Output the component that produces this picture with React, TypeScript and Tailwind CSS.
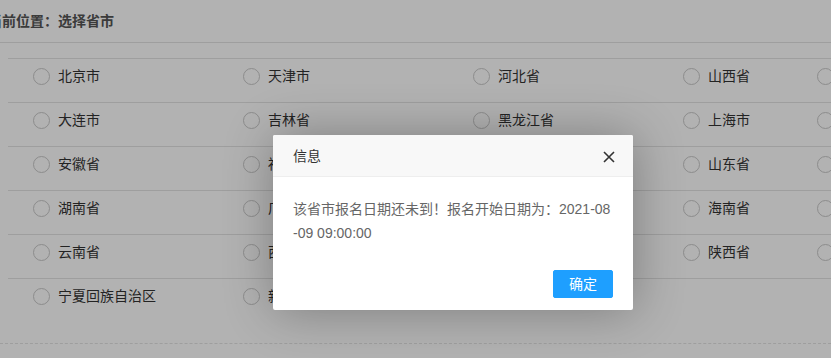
import React from "react";

const rows: string[][] = [
  ["北京市", "天津市", "河北省", "山西省", "内蒙古自治区"],
  ["大连市", "吉林省", "黑龙江省", "上海市", "江苏省"],
  ["安徽省", "福建省", "江西省", "山东省", "河南省"],
  ["湖南省", "广东省", "广西壮族自治区", "海南省", "重庆市"],
  ["云南省", "西藏自治区", "甘肃省", "陕西省", "青海省"],
  ["宁夏回族自治区", "新疆维吾尔自治区"],
];

function Radio({ label }: { label: string }) {
  return (
    <label className="flex h-[20px] items-center gap-[8px] pl-[25px] whitespace-nowrap">
      <span className="h-[17px] w-[17px] shrink-0 rounded-full border border-[#c9c9c9] bg-white" />
      <span className="text-[14px] leading-[20px] text-[#333]">{label}</span>
    </label>
  );
}

export default function App() {
  return (
    <div className="relative h-[358px] w-full overflow-hidden bg-white font-['Liberation_Sans','Noto_Sans_CJK_SC',sans-serif]">
      {/* breadcrumb */}
      <div className="flex h-[43px] items-center border-b border-[#e2e2e2]">
        <span className="ml-[-12px] text-[14px] font-bold text-[#555]">当前位置：选择省市</span>
      </div>

      {/* province table */}
      <div className="mt-[15px] ml-[8px]">
        {rows.map((row, i) => (
          <div
            key={i}
            className="grid h-[44px] grid-cols-[210px_230px_210px_134px_1fr] border-t border-[#e2e2e2] pt-[7px]"
          >
            {row.map((name) => (
              <Radio key={name} label={name} />
            ))}
          </div>
        ))}
      </div>

      <div className="mt-[21px] border-t border-dashed border-[#e2e2e2]" />

      {/* shade */}
      <div className="absolute inset-0 bg-black/30" />

      {/* layer dialog */}
      <div className="absolute left-[273px] top-[135px] w-[360px] rounded-[2px] bg-white shadow-[1px_1px_50px_rgba(0,0,0,0.3)]">
        <div className="relative h-[42px] rounded-t-[2px] border-b border-[#eee] bg-[#f8f8f8] pl-[20px] text-[14px] leading-[42px] text-[#333]">
          信息
          <button className="absolute right-[18px] top-[16px] flex h-[12px] w-[12px] items-center justify-center">
            <svg width="12" height="12" viewBox="0 0 12 12">
              <path d="M1 1L11 11M11 1L1 11" stroke="#333" strokeWidth="1.6" />
            </svg>
          </button>
        </div>
        <div className="p-[20px] text-[14px] leading-[24px] text-[#666] break-all">
          该省市报名日期还未到！报名开始日期为：2021-08-09 09:00:00
        </div>
        <div className="flex justify-end px-[15px] pb-[12px]">
          <button className="mx-[5px] mt-[5px] h-[28px] rounded-[2px] border border-[#1E9FFF] bg-[#1E9FFF] px-[15px] text-[14px] leading-[26px] text-white">
            确定
          </button>
        </div>
      </div>
    </div>
  );
}
